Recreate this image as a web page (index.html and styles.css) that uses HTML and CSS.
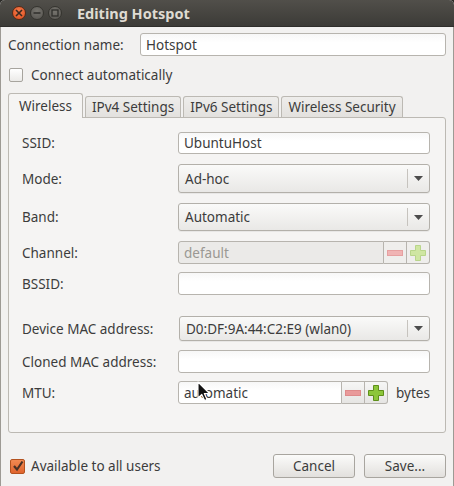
FILE: index.html
```html
<!DOCTYPE html>
<html>
<head>
<meta charset="utf-8">
<link rel="stylesheet" href="styles.css">
</head>
<body>
<div class="window">
  <div class="titlebar">
    <div class="wbtns">
      <span class="wbtn close"><svg width="8" height="8" viewBox="0 0 8 8"><path d="M1 1L7 7M7 1L1 7" stroke="#3a2a22" stroke-width="1.6"/></svg></span>
      <span class="wbtn"><svg width="8" height="8" viewBox="0 0 8 8"><path d="M0.5 4H7.5" stroke="#2f2e2b" stroke-width="1.6"/></svg></span>
      <span class="wbtn"><svg width="8" height="8" viewBox="0 0 8 8"><rect x="1" y="1" width="6" height="6" fill="none" stroke="#2f2e2b" stroke-width="1.3"/></svg></span>
    </div>
    <div class="title">Editing Hotspot</div>
  </div>
  <div class="content">
    <div class="conn-row">
      <span class="lbl">Connection name:</span>
      <div class="entry conn-entry">Hotspot</div>
    </div>
    <div class="check-row">
      <span class="checkbox"></span>
      <span class="lbl">Connect automatically</span>
    </div>
    <div class="tabs">
      <div class="tab active">Wireless</div>
      <div class="tab">IPv4 Settings</div>
      <div class="tab">IPv6 Settings</div>
      <div class="tab">Wireless Security</div>
    </div>
    <div class="panel">
      <div class="row r-ssid">
        <span class="lbl">SSID:</span>
        <div class="entry">UbuntuHost</div>
      </div>
      <div class="row r-mode">
        <span class="lbl">Mode:</span>
        <div class="combo"><span class="cval">Ad-hoc</span><span class="carrow"><svg width="9" height="5" viewBox="0 0 9 5"><path d="M0 0H9L4.5 5Z" fill="#4c4c4c"/></svg></span></div>
      </div>
      <div class="row r-band">
        <span class="lbl">Band:</span>
        <div class="combo"><span class="cval">Automatic</span><span class="carrow"><svg width="9" height="5" viewBox="0 0 9 5"><path d="M0 0H9L4.5 5Z" fill="#4c4c4c"/></svg></span></div>
      </div>
      <div class="row r-chan">
        <span class="lbl">Channel:</span>
        <div class="spin disabled">
          <div class="entry sentry">default</div>
          <span class="sbtn"><svg width="16" height="6" viewBox="0 0 16 6"><rect x="0.5" y="0.5" width="15" height="5" fill="#f0b4b4" stroke="#e6a0a0"/></svg></span>
          <span class="sbtn"><svg width="16" height="16" viewBox="0 0 16 16"><path d="M5.5 0.5H10.5V5.5H15.5V10.5H10.5V15.5H5.5V10.5H0.5V5.5H5.5Z" fill="#cfe6a2" stroke="#b9d58a"/></svg></span>
        </div>
      </div>
      <div class="row r-bssid">
        <span class="lbl">BSSID:</span>
        <div class="entry"></div>
      </div>
      <div class="row r-dev">
        <span class="lbl">Device MAC address:</span>
        <div class="combo centry"><span class="cval">D0:DF:9A:44:C2:E9 (wlan0)</span><span class="carrow"><svg width="9" height="5" viewBox="0 0 9 5"><path d="M0 0H9L4.5 5Z" fill="#4c4c4c"/></svg></span></div>
      </div>
      <div class="row r-clone">
        <span class="lbl">Cloned MAC address:</span>
        <div class="entry"></div>
      </div>
      <div class="row r-mtu">
        <span class="lbl">MTU:</span>
        <div class="mtu-wrap">
          <div class="spin mtu">
            <div class="entry sentry">automatic</div>
            <span class="sbtn"><svg width="16" height="6" viewBox="0 0 16 6"><rect x="0.5" y="0.5" width="15" height="5" fill="#e99a9a" stroke="#de8a8a"/></svg></span>
            <span class="sbtn"><svg width="16" height="16" viewBox="0 0 16 16"><path d="M5.5 0.5H10.5V5.5H15.5V10.5H10.5V15.5H5.5V10.5H0.5V5.5H5.5Z" fill="#8cc63a" stroke="#5f8f1a"/></svg></span>
          </div>
          <span class="lbl">bytes</span>
        </div>
      </div>
    </div>
    <div class="footer">
      <div class="check-row avail">
        <span class="checkbox checked"><svg width="12" height="12" viewBox="0 0 12 12"><path d="M2 6L5 9.5L10.5 1.5" fill="none" stroke="#4a3226" stroke-width="2.2"/></svg></span>
        <span class="lbl">Available to all users</span>
      </div>
      <div class="buttons">
        <div class="btn">Cancel</div>
        <div class="btn">Save...</div>
      </div>
    </div>
  </div>
  <svg class="cursor" width="14" height="21" viewBox="0 0 14 21"><path d="M1 1V17L4.8 13.4L7.6 19.6L10 18.5L7.3 12.5H12.5Z" fill="#111" stroke="#fff" stroke-width="1.1" stroke-linejoin="round"/></svg>
</div>
</body>
</html>
```

FILE: styles.css
```css
html, body {
  margin: 0;
  padding: 0;
}
body {
  width: 454px;
  height: 486px;
  background: #2c2b28;
  font-family: "Noto Sans", "Open Sans", sans-serif;
  font-size: 13.5px;
  color: #3c3c3c;
  overflow: hidden;
}
.window {
  position: relative;
  width: 454px;
  height: 486px;
  box-sizing: border-box;
  background: #f2f1f0;
  border-radius: 5px 5px 0 0;
  overflow: hidden;
}
.titlebar {
  height: 27px;
  background: linear-gradient(#514f4a, #3c3b37);
  display: flex;
  align-items: center;
  border-bottom: 1px solid #2f2e2b;
  box-sizing: border-box;
}
.wbtns {
  display: flex;
  gap: 4px;
  margin-left: 12px;
}
.wbtn {
  width: 14px;
  height: 14px;
  border-radius: 50%;
  background: radial-gradient(circle at 50% 35%, #76746e, #55534f);
  border: 1px solid #35342f;
  box-sizing: border-box;
  display: flex;
  align-items: center;
  justify-content: center;
}
.wbtn.close {
  background: radial-gradient(circle at 50% 35%, #f47a4b, #de4f1f);
  border-color: #5a2a16;
}
.title {
  margin-left: 15px;
  font-weight: bold;
  font-size: 14.5px;
  color: #dfdbd2;
}
.content {
  border: 1px solid #9d9a94;
  border-top: none;
  height: 458px;
  padding: 6px 7px 0 7px;
  display: flex;
  flex-direction: column;
}
.lbl {
  white-space: nowrap;
}
.entry {
  box-sizing: border-box;
  height: 23px;
  border: 1px solid #b7b4ae;
  border-radius: 3px;
  background: linear-gradient(#f7f7f7, #ffffff 40%);
  padding: 0 5px;
  display: flex;
  align-items: center;
  color: #3c3c3c;
}
.conn-row {
  display: flex;
  align-items: center;
  justify-content: space-between;
}
.conn-entry {
  width: 306px;
  margin-right: 0;
}
.check-row {
  display: flex;
  align-items: center;
  gap: 8px;
  margin-top: 10px;
  padding-left: 1px;
}
.checkbox {
  width: 14px;
  height: 14px;
  box-sizing: border-box;
  border: 1px solid #a7a49e;
  border-radius: 2px;
  background: linear-gradient(#ffffff, #ebeae8);
  display: flex;
  align-items: center;
  justify-content: center;
}
.checkbox.checked {
  width: 15px;
  height: 15px;
  border-color: #b3521f;
  background: linear-gradient(#f28a52, #e0642d);
}
.tabs {
  display: flex;
  align-items: flex-end;
  margin-top: 9px;
  gap: 2px;
  height: 24px;
  position: relative;
  z-index: 1;
}
.tab {
  box-sizing: border-box;
  height: 21px;
  padding: 0 6px;
  border: 1px solid #bcb9b3;
  border-bottom: none;
  border-radius: 3px 3px 0 0;
  background: linear-gradient(#eeedeb, #e3e1de);
  display: flex;
  align-items: center;
}
.tab.active {
  height: 25px;
  padding: 0 10px;
  background: #f5f4f3;
  margin-bottom: -1px;
}
.panel {
  box-sizing: border-box;
  height: 316px;
  border: 1px solid #bcb9b3;
  border-radius: 0 3px 3px 3px;
  background: #f5f4f3;
  padding: 14px 15px 0 13px;
  display: flex;
  flex-direction: column;
}
.row {
  display: grid;
  grid-template-columns: 156px 252px;
  align-items: center;
}
.r-ssid .entry { height: 22px; }
.r-mode { margin-top: 10px; }
.r-band { margin-top: 10px; }
.r-chan { margin-top: 10px; }
.r-bssid { margin-top: 8px; }
.r-dev { margin-top: 21px; }
.r-clone { margin-top: 9px; }
.r-mtu { margin-top: 8px; }
.combo {
  box-sizing: border-box;
  height: 29px;
  border: 1px solid #b3b0aa;
  border-radius: 3px;
  background: linear-gradient(#fafaf9, #e9e8e6);
  display: flex;
  align-items: center;
  box-shadow: 0 1px 0 rgba(0,0,0,0.05);
}
.r-band .combo { height: 28px; }
.combo.centry {
  height: 25px;
  margin-left: 1px;
}
.cval {
  flex: 1;
  padding-left: 6px;
  white-space: nowrap;
}
.carrow {
  width: 21px;
  height: 70%;
  border-left: 1px solid #c6c3be;
  display: flex;
  align-items: center;
  justify-content: center;
}
.spin {
  display: flex;
  height: 23px;
}
.spin .sentry {
  flex: 1;
  border-radius: 3px 0 0 3px;
}
.sbtn {
  box-sizing: border-box;
  width: 23px;
  height: 23px;
  border: 1px solid #b7b4ae;
  border-left: none;
  background: linear-gradient(#f6f6f5, #e6e5e3);
  display: flex;
  align-items: center;
  justify-content: center;
}
.sbtn:last-child {
  border-radius: 0 3px 3px 0;
}
.spin.disabled .sentry {
  background: #ebeae8;
  color: #9a9893;
}
.spin.disabled .sbtn {
  background: #efeeec;
}
.mtu-wrap {
  display: flex;
  align-items: center;
  gap: 8px;
}
.spin.mtu {
  width: 210px;
}
.footer {
  display: flex;
  align-items: center;
  justify-content: space-between;
  margin-top: 21px;
}
.avail {
  margin-top: 0;
  padding-left: 2px;
  gap: 6px;
}
.buttons {
  display: flex;
  gap: 9px;
}
.btn {
  box-sizing: border-box;
  width: 82px;
  height: 24px;
  border: 1px solid #a8a59f;
  border-radius: 3px;
  background: linear-gradient(#fbfbfa, #e2e0dd);
  display: flex;
  align-items: center;
  justify-content: center;
}
.cursor {
  position: absolute;
  left: 197px;
  top: 381px;
}
```
